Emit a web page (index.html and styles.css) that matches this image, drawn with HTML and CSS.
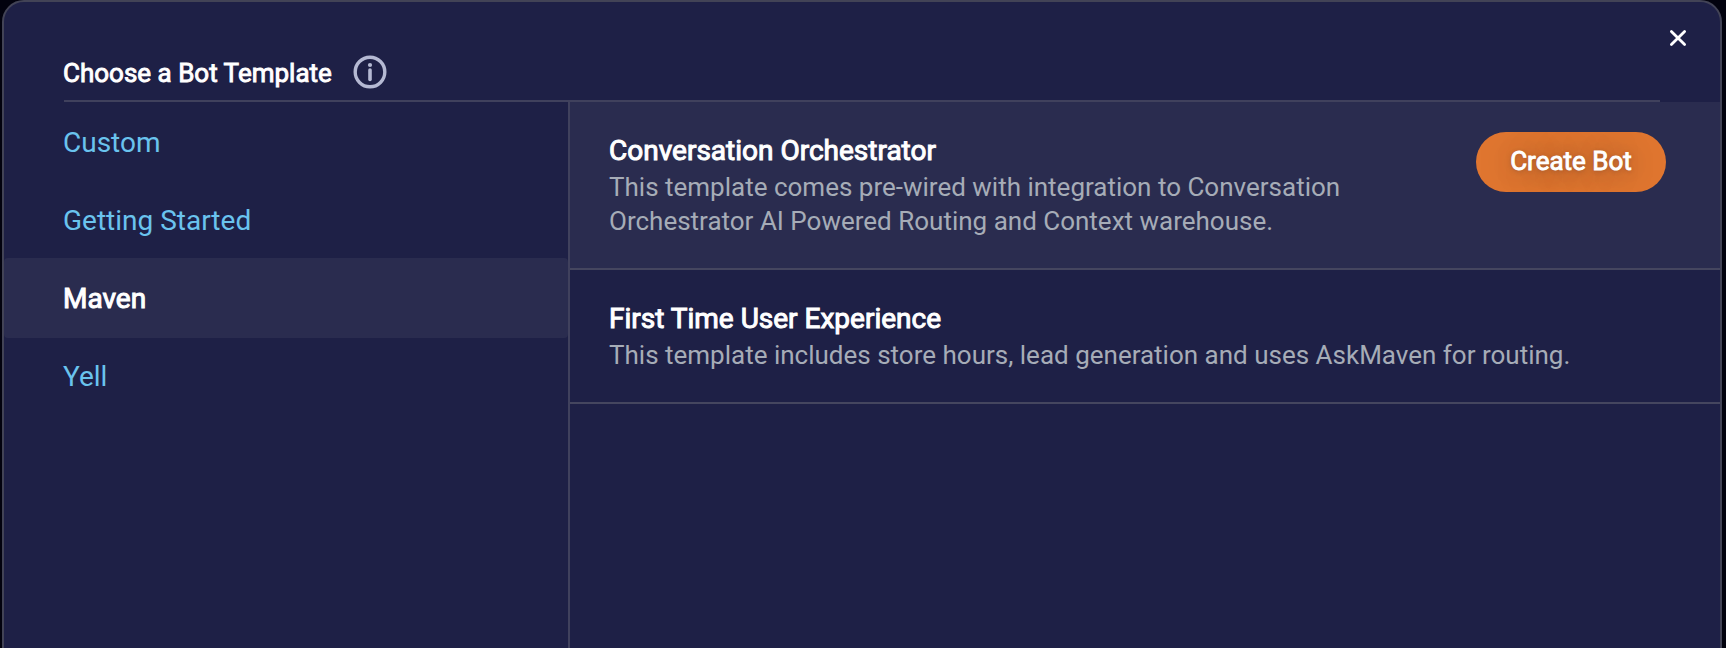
FILE: index.html
```html
<!DOCTYPE html>
<html lang="en">
<head>
<meta charset="utf-8">
<title>Choose a Bot Template</title>
<link rel="stylesheet" href="styles.css">
</head>
<body>
<div class="modal">
  <button class="close" aria-label="Close">
    <svg width="20" height="20" viewBox="0 0 20 20" fill="none" stroke="#fff" stroke-width="2.8" stroke-linecap="round"><path d="M3.4 3.4 16.6 16.6M16.6 3.4 3.4 16.6"/></svg>
  </button>
  <header class="header">
    <h1 class="heading">Choose a Bot Template</h1>
    <svg class="info" width="34" height="34" viewBox="0 0 34 34"><circle cx="17" cy="17" r="14.8" fill="none" stroke="#b5b9d3" stroke-width="3.4"/><circle cx="17" cy="10" r="2.1" fill="#b5b9d3"/><path d="M17 15v9.4" stroke="#b5b9d3" stroke-width="3.6" stroke-linecap="round"/></svg>
  </header>
  <div class="content">
    <nav class="categories">
      <a class="category">Custom</a>
      <a class="category">Getting Started</a>
      <a class="category selected">Maven</a>
      <a class="category">Yell</a>
    </nav>
    <main class="templates">
      <section class="template active">
        <div class="template-text">
          <h2 class="template-name">Conversation Orchestrator</h2>
          <p class="template-desc">This template comes pre-wired with integration to Conversation Orchestrator AI Powered Routing and Context warehouse.</p>
        </div>
        <button class="create">Create Bot</button>
      </section>
      <section class="template">
        <div class="template-text">
          <h2 class="template-name">First Time User Experience</h2>
          <p class="template-desc">This template includes store hours, lead generation and uses AskMaven for routing.</p>
        </div>
      </section>
    </main>
  </div>
</div>
</body>
</html>
```
FILE: styles.css
```css
* { box-sizing: border-box; }

body {
  margin: 0;
  height: 648px;
  overflow: hidden;
  background: #02020e;
  font-family: Roboto, "Liberation Sans", sans-serif;
  font-size: 26px;
}

.modal {
  position: relative;
  display: flex;
  flex-direction: column;
  height: 672px;
  margin: 0 4px 0 2px;
  border: 2px solid #424356;
  border-radius: 22px;
  background: #1e2046;
  overflow: hidden;
}

.close {
  position: absolute;
  top: 26px;
  right: 32px;
  padding: 0;
  border: 0;
  background: none;
  line-height: 0;
}

.header {
  display: flex;
  align-items: center;
  gap: 21px;
  height: 100px;
  margin: 0 60px;
  padding-top: 42px;
  border-bottom: 2px solid #40415d;
}

.heading {
  margin: 0 0 0 -1px;
  padding-top: 2px;
  font-size: 26px;
  font-weight: 400;
  line-height: 34px;
  color: #fff;
  -webkit-text-stroke: 0.9px #fff;
}

.info { margin-bottom: 1px; }

.content {
  display: flex;
  flex: 1;
}

.categories {
  width: 566px;
  border-right: 2px solid #40415d;
}

.category {
  display: block;
  height: 80px;
  margin-bottom: -2px;
  padding-left: 59px;
  border-radius: 4px;
  font-size: 28px;
  line-height: 82px;
  color: #6ac3ee;
}

.category.selected {
  background: #2a2c4f;
  color: #fff;
  -webkit-text-stroke: 1px #fff;
}

.templates { flex: 1; }

.template {
  display: flex;
  justify-content: space-between;
  align-items: flex-start;
  padding: 30px 54px 30px 39px;
  border-bottom: 2px solid #45465f;
}

.template.active { background: #2a2c4f; }

.active .template-text { width: 790px; }

.template-name {
  margin: 0;
  font-size: 28px;
  font-weight: 400;
  line-height: 38px;
  color: #fff;
  -webkit-text-stroke: 1px #fff;
}

.template-desc {
  margin: 0;
  line-height: 34px;
  color: #a6acb7;
}

.create {
  width: 190px;
  height: 60px;
  padding: 0 0 2px;
  border: 0;
  border-radius: 30px;
  background: #e07630;
  font: 400 26px/34px Roboto, "Liberation Sans", sans-serif;
  color: #fff;
  overflow: hidden;
  text-shadow: 0 1px 4px rgba(60, 50, 60, 0.35), 0 2px 30px rgba(50, 40, 40, 0.6);
  -webkit-text-stroke: 0.9px #fff;
}
```
